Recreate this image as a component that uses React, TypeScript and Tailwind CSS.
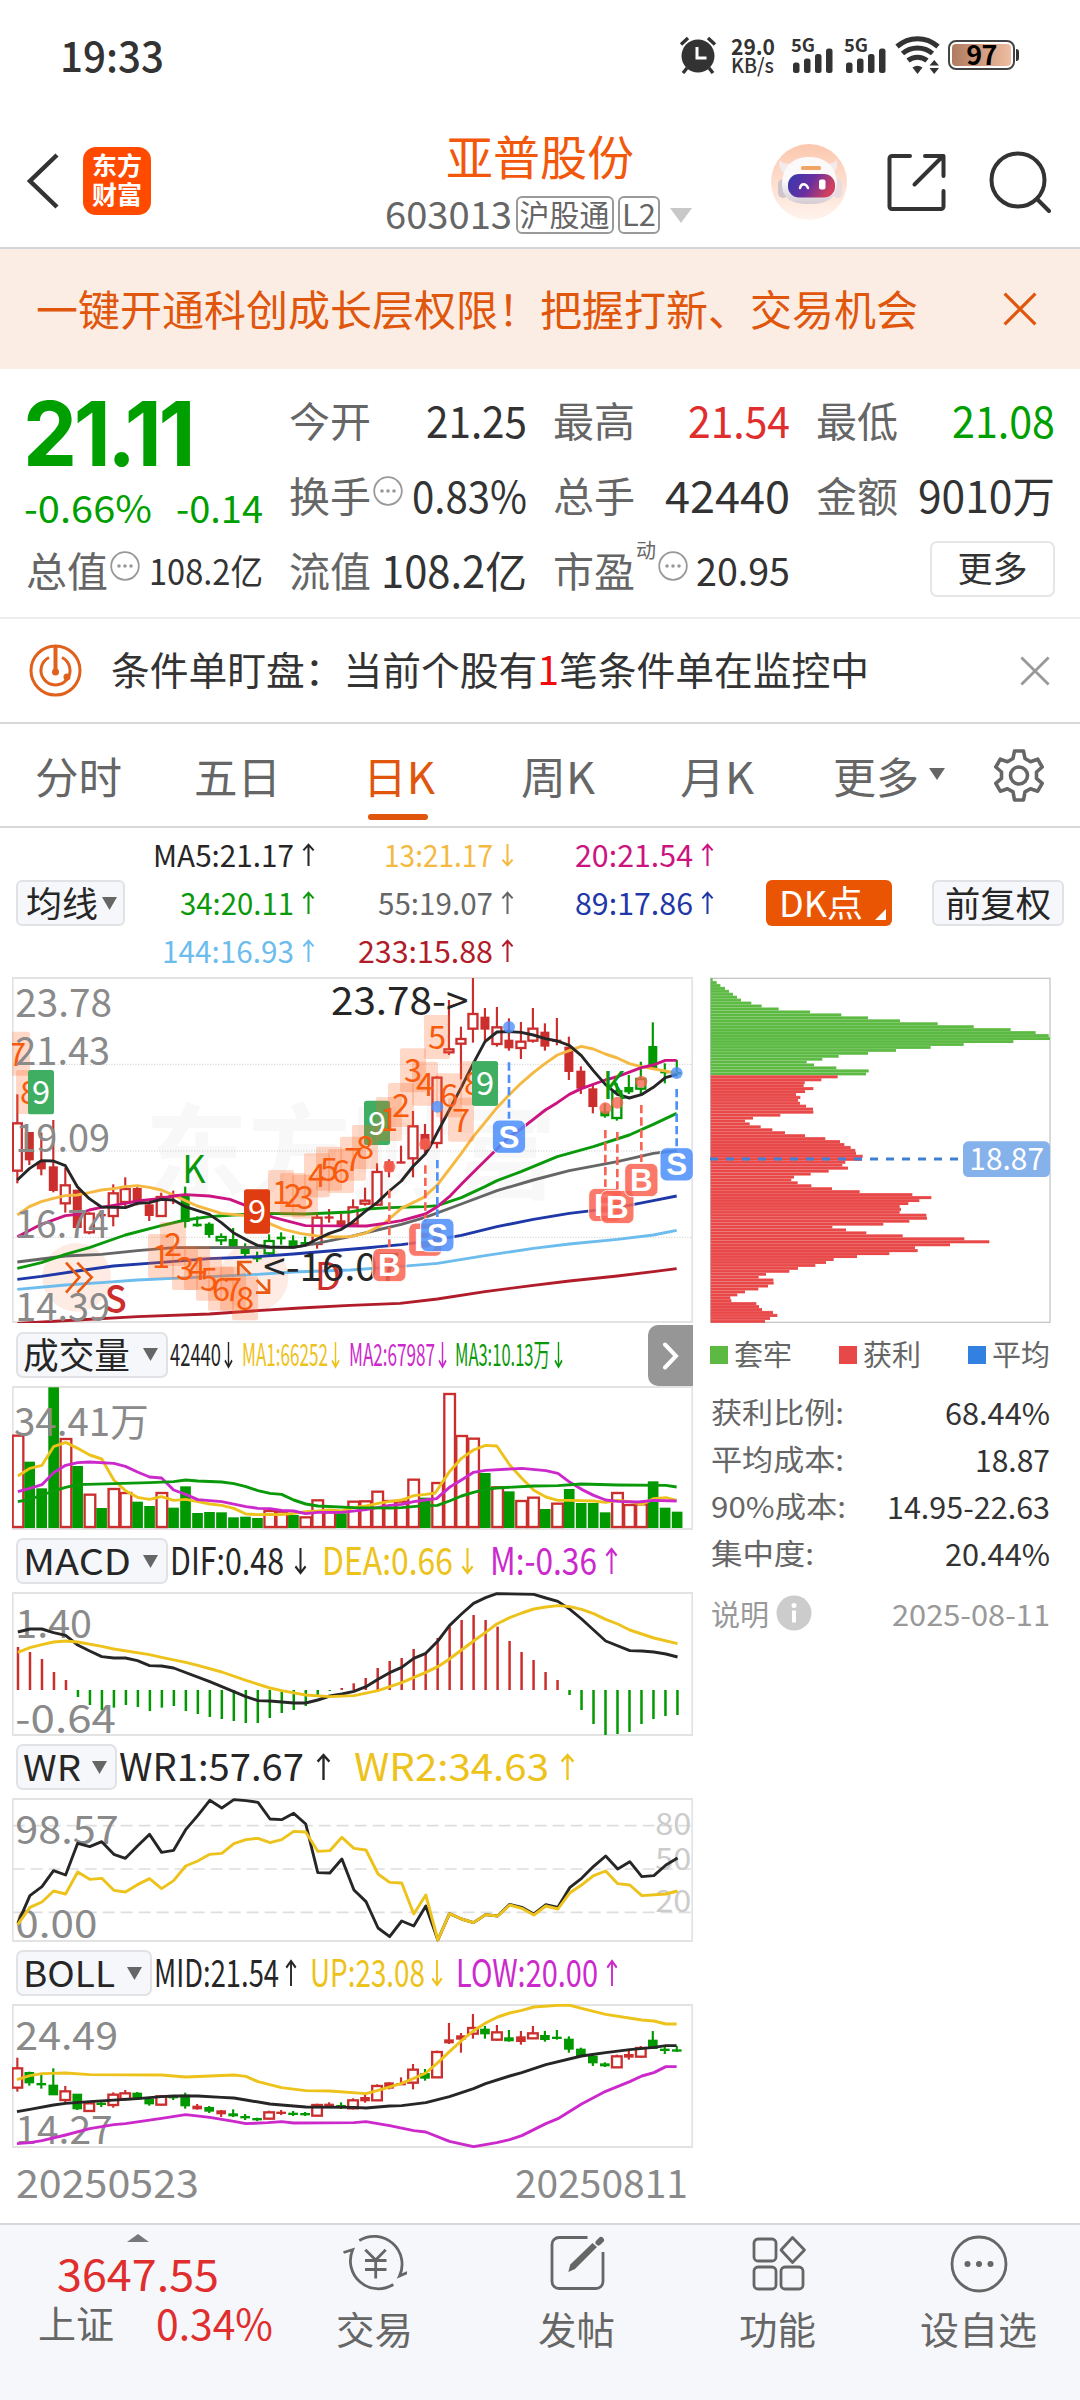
import React, { useLayoutEffect, useRef } from "react";

const c = {
  red: "#cc2e2e",
  green: "#009900",
  black: "#262626",
  yellow: "#edc21a",
  purple: "#cc29cc",
  orange: "#f75a0a",
  axis: "#8a8a8a",
};

const FONT = "'Noto Sans CJK SC', 'Noto Sans', sans-serif";

// Squeezes one line of text into a fixed width, like an auto-sizing label
function Fit({ w, className = "", children }: { w: number; className?: string; children: React.ReactNode }) {
  const ref = useRef<HTMLSpanElement>(null);
  useLayoutEffect(() => {
    const el = ref.current;
    if (!el) return;
    el.style.transform = "none";
    const natural = el.getBoundingClientRect().width;
    if (natural) el.style.transform = `scaleX(${w / natural})`;
  }, [w, children]);
  return (
    <span className={`block shrink-0 ${className}`} style={{ width: w }}>
      <span ref={ref} className="inline-block origin-left whitespace-nowrap align-top">
        {children}
      </span>
    </span>
  );
}

function Arrow({ down, w = 13, h = 24, className = "" }: { down?: boolean; w?: number; h?: number; className?: string }) {
  return (
    <svg width={w} height={h} viewBox="0 0 14 26" preserveAspectRatio="none" fill="none" stroke="currentColor" strokeWidth="2.200" className={`shrink-0 ${className}`}>
      {down ? <path d="M7 1v23M1.5 18 7 24.2 12.5 18" /> : <path d="M7 25V2M1.5 8 7 1.8 12.5 8" />}
    </svg>
  );
}

function Tri({ w = 15, h = 12, color = "#666", className = "" }: { w?: number; h?: number; color?: string; className?: string }) {
  return (
    <svg width={w} height={h} viewBox="0 0 15 12" preserveAspectRatio="none" className={`shrink-0 ${className}`}>
      <path d="M0 0h15L7.5 12z" fill={color} />
    </svg>
  );
}

function Dots() {
  return (
    <svg width="30" height="30" viewBox="0 0 30 30" className="shrink-0 -mt-2">
      <circle cx="15" cy="15" r="13.8" fill="none" stroke="#999" strokeWidth="1.8" />
      <circle cx="9" cy="15" r="1.8" fill="#999" />
      <circle cx="15" cy="15" r="1.8" fill="#999" />
      <circle cx="21" cy="15" r="1.8" fill="#999" />
    </svg>
  );
}

function Close({ size, color, sw = 3 }: { size: number; color: string; sw?: number }) {
  return (
    <svg width={size} height={size} viewBox="0 0 32 32" fill="none" stroke={color} strokeWidth={sw}>
      <path d="M1.5 1.5l29 29M30.5 1.5l-29 29" />
    </svg>
  );
}

/* ---------- top bars ---------- */

function Signal() {
  return (
    <div className="flex flex-col items-start">
      <Fit w={24} className="text-[18px] leading-[14px] font-bold">5G</Fit>
      <svg width="42" height="26" viewBox="0 0 42 26" className="-mt-[4px]" fill="#333">
        <rect x="2" y="15.500" width="6.500" height="10.500" rx="2.500" />
        <rect x="13" y="11.500" width="6.500" height="14.500" rx="2.500" />
        <rect x="24" y="7" width="6.500" height="19" rx="2.500" />
        <rect x="35" y="1.500" width="6.500" height="24.500" rx="2.500" />
      </svg>
    </div>
  );
}

function StatusBar() {
  return (
    <div className="flex h-[110px] items-center pl-[60px] pr-[61px] text-[#333]">
      <Fit w={104} className="-mt-[3px] text-[42px] leading-none font-medium">19:33</Fit>
      <div className="ml-auto flex h-[38px] items-center">
        <svg width="38" height="38" viewBox="0 0 38 38">
          <circle cx="19" cy="20" r="16.500" fill="#333" />
          <path d="M2 8.500 9 2M36 8.500 29 2M8 32l-4 5M30 32l4 5" stroke="#333" strokeWidth="3.400" fill="none" />
          <path d="M18 11v11h9.500" stroke="#fff" strokeWidth="3" fill="none" />
        </svg>
        <div className="ml-[14px] flex flex-col gap-[2px] font-medium">
          <Fit w={44} className="text-[22px] leading-[18px] font-bold">29.0</Fit>
          <Fit w={43} className="text-[20px] leading-[18px]">KB/s</Fit>
        </div>
        <div className="ml-[16px]"><Signal /></div>
        <div className="ml-[11px]"><Signal /></div>
        <svg width="46" height="38" viewBox="0 0 46 38" className="ml-[9px]" fill="none" stroke="#333" strokeWidth="5">
          <path d="M2 10.500c12-10.500 29-10.500 41 0" />
          <path d="M7.500 17.500c8.500-7.500 21.500-7.500 30 0" />
          <path d="M13 24.500c5.500-4.500 13.500-4.500 19 0" />
          <path d="M17.500 31.500q5-3.500 10 0l-5 6.500z" fill="#333" stroke="none" />
          <path d="M34.500 29.500h9.500L39.200 24zM34.500 32h9.500l-4.800 6z" fill="#333" stroke="none" />
        </svg>
        <div className="ml-[7px] flex h-[30px] w-[67px] items-center justify-center rounded-[8px] border-2 border-[#444] bg-linear-to-r from-[#ae7a5e] to-[#f1bfa3] bg-clip-content p-[2px] text-[27px] leading-none font-bold text-black">
          <span className="-mt-[3px] tracking-tight">97</span>
        </div>
        <div className="ml-px h-3 w-[3px] rounded-r bg-[#333]" />
      </div>
    </div>
  );
}

function Robot() {
  return (
    <svg width="76" height="76" viewBox="0 0 76 76">
      <defs>
        <linearGradient id="halo" x1="0" y1="0" x2="0" y2="1">
          <stop offset="0" stopColor="#fcc7ae" />
          <stop offset="1" stopColor="#fff4ee" />
        </linearGradient>
        <linearGradient id="visor" x1="0" y1="0" x2="1" y2="0.300">
          <stop offset="0" stopColor="#3338b0" />
          <stop offset="0.550" stopColor="#6a2fa0" />
          <stop offset="1" stopColor="#d0405e" />
        </linearGradient>
        <linearGradient id="helmet" x1="0" y1="0" x2="0" y2="1">
          <stop offset="0.500" stopColor="#fbf9fa" />
          <stop offset="1" stopColor="#d5ccd3" />
        </linearGradient>
      </defs>
      <circle cx="38" cy="38" r="38" fill="url(#halo)" />
      <path d="M9 15c1 5 5 4 10 5l-6 10c-4-4-6-10-4-15zM65 15c-1 5-5 4-9 5l6 10c4-4 5-10 3-15z" fill="#f3eaec" />
      <rect x="7" y="35" width="10" height="19" rx="5" fill="#cfc5cd" />
      <rect x="62" y="35" width="9" height="19" rx="4.500" fill="#e9dbe0" />
      <path d="M38 13c17 0 27 10 28 26 0 14-8 21-28 21s-27-7-27-21c1-16 10-26 27-26z" fill="url(#helmet)" />
      <rect x="17" y="30" width="47" height="23.500" rx="11" fill="url(#visor)" />
      <rect x="30" y="22" width="20" height="4" rx="1.500" fill="#f0a566" />
      <path d="M29 44c1-5 6-5 8 0" fill="none" stroke="#fff" strokeWidth="2.500" strokeLinecap="round" />
      <rect x="48" y="35.500" width="6.500" height="10" rx="2" fill="#fff" />
    </svg>
  );
}

function NavBar() {
  return (
    <div className="grid h-[139px] grid-cols-[370px_340px_370px] border-b-2 border-[#d3d4d8]">
      <div className="flex items-center pt-[5px] pl-[26px]">
        <svg width="34" height="56" viewBox="0 0 34 56" fill="none" stroke="#333" strokeWidth="4.500">
          <path d="M31 2 4 28l27 26" />
        </svg>
        <div className="ml-[23px] flex size-[68px] flex-col items-center justify-center rounded-[13px] bg-[#ff4a00] pb-1 text-[25px] leading-[29px] font-bold text-white">
          <span>东方</span>
          <span>财富</span>
        </div>
      </div>
      <div className="flex flex-col items-center pt-[20px]">
        <div className="text-[47px] leading-[50px] text-[#f2580c]">亚普股份</div>
        <div className="mt-[16px] -ml-[4px] flex h-[38px] items-center text-[#666]">
          <Fit w={127} className="text-[38px] leading-none -mt-1">603013</Fit>
          <span className="ml-1 flex h-[38px] w-[98px] items-center justify-center rounded-[6px] border-2 border-[#999] pb-1 text-[30px] leading-none">沪股通</span>
          <span className="ml-1 flex h-[38px] w-[42px] items-center justify-center rounded-[6px] border-2 border-[#999] pb-1 text-[30px] leading-none">
            <Fit w={34}>L2</Fit>
          </span>
          <Tri w={22} h={15} color="#c8c8c8" className="ml-[10px]" />
        </div>
      </div>
      <div className="flex items-start pt-[34px] pl-[61px]">
        <Robot />
        <svg width="60" height="60" viewBox="0 0 60 60" className="mt-[8px] ml-[39px]" fill="none" stroke="#333" strokeWidth="4" strokeLinecap="round" strokeLinejoin="round">
          <path d="M24 4H6a2.500 2.500 0 0 0-2.500 2.500v48A2.500 2.500 0 0 0 6 57h49a2.500 2.500 0 0 0 2.500-2.500V39" />
          <path d="M39 4h18.500v20M57 4 28.500 32.500" />
        </svg>
        <svg width="62" height="62" viewBox="0 0 62 62" className="mt-[7px] ml-[43px]" fill="none" stroke="#333" strokeWidth="4" strokeLinecap="round">
          <circle cx="29" cy="29" r="26.500" />
          <path d="M48 48l12 12" />
        </svg>
      </div>
    </div>
  );
}

/* ---------- quote ---------- */

function Cell({ label, value, w, color = "text-[#333]", size = "text-[43px]", extra }: {
  label: string; value: string; w: number; color?: string; size?: string; extra?: React.ReactNode;
}) {
  return (
    <div className="flex h-[75px] items-center leading-none">
      <span className="text-[41px] text-[#666]">{label}</span>
      {extra}
      <Fit w={w} className={`ml-auto ${size} ${color}`}>{value}</Fit>
    </div>
  );
}

function Quote() {
  return (
    <div className="grid h-[250px] grid-cols-[237px_238px_237px_239px] gap-x-[26px] border-b-2 border-[#ececec] pr-[24px] pl-[26px] pt-[13px]">
      <div>
        <div className="flex h-[99px] items-center pt-[4px]">
          <Fit w={169} className="-ml-[3px] font-['Inter'] text-[90px] leading-none font-bold tracking-[-0.04em] text-[#009f00]">21.11</Fit>
        </div>
        <div className="flex h-[51px] items-center justify-between pt-px text-[38px] leading-none text-[#009f00]">
          <Fit w={128} className="-ml-[2px]">-0.66%</Fit>
          <Fit w={87}>-0.14</Fit>
        </div>
        <Cell label="总值" value="108.2亿" w={114} size="text-[35px]" extra={<span className="ml-[2px]"><Dots /></span>} />
      </div>
      <div>
        <Cell label="今开" value="21.25" w={101} />
        <Cell label="换手" value="0.83%" w={115} extra={<span className="ml-[2px]"><Dots /></span>} />
        <Cell label="流值" value="108.2亿" w={146} />
      </div>
      <div>
        <Cell label="最高" value="21.54" w={102} color="text-[#e02e2e]" />
        <Cell label="总手" value="42440" w={125} />
        <Cell
          label="市盈"
          value="20.95"
          w={94}
          size="text-[39px]"
          extra={
            <>
              <span className="-mt-10 ml-px text-[20px] text-[#666]">动</span>
              <span className="ml-[2px]"><Dots /></span>
            </>
          }
        />
      </div>
      <div>
        <Cell label="最低" value="21.08" w={103} color="text-[#009f00]" />
        <Cell label="金额" value="9010万" w={137} />
        <div className="flex h-[75px] items-center justify-end">
          <span className="flex h-[56px] w-[125px] -translate-y-px items-center justify-center rounded-[7px] border-2 border-[#e6e6e6] pb-1 text-[35px] leading-none text-[#333]">更多</span>
        </div>
      </div>
    </div>
  );
}

function Alert() {
  return (
    <div className="flex h-[105px] items-center border-b-2 border-[#d9d9d9] pr-[30px] pl-[29px]">
      <svg width="53" height="53" viewBox="0 0 53 53" fill="none" stroke="#e0611c" strokeWidth="3">
        <circle cx="26.500" cy="26.500" r="24.500" />
        <path d="M20 13.500a14.500 14.500 0 1 0 13 0" />
        <path d="M26.500 3v24" strokeWidth="4" />
        <circle cx="26.500" cy="28" r="3.500" fill="#e0611c" stroke="none" />
        <circle cx="38" cy="33" r="3.500" fill="#e0611c" stroke="none" />
      </svg>
      <Fit w={758} className="ml-[29px] text-[39px] leading-none text-[#333] -mt-[4px]">
        条件单盯盘：当前个股有<span className="text-[#f00a0a]">1</span>笔条件单在监控中
      </Fit>
      <div className="ml-auto"><Close size={30} color="#999" /></div>
    </div>
  );
}

function Tabs() {
  return (
    <div className="flex h-[104px] items-center border-b-2 border-[#d9d9d9] pt-px text-[43px] leading-none text-[#666]">
      <Fit w={87} className="ml-[35px]">分时</Fit>
      <Fit w={87} className="ml-[72px]">五日</Fit>
      <div className="relative ml-[82px] flex h-full items-center text-[#e0560c]">
        <Fit w={72}>日K</Fit>
        <span className="absolute bottom-[6px] left-[5px] h-[6px] w-[60px] rounded-full bg-[#e0560c]" />
      </div>
      <Fit w={74} className="ml-[86px]">周K</Fit>
      <Fit w={74} className="ml-[85px]">月K</Fit>
      <Fit w={86} className="ml-[79px]">更多</Fit>
      <Tri w={16} h={12} className="ml-[10px] -mt-1" />
      <svg width="54" height="54" viewBox="0 0 54 54" className="ml-[47px]" fill="none" stroke="#666" strokeWidth="3.600">
        <path d="M22.500 2h9l1.500 7.500 5.500 3.200 7.200-2.500 4.500 7.800-5.700 5v6.400l5.700 5-4.500 7.800-7.200-2.500-5.500 3.200-1.500 8.100h-9L21 42.900l-5.500-3.200-7.200 2.500-4.500-7.800 5.700-5V23l-5.700-5 4.500-7.800 7.200 2.500L21 9.500z" strokeLinejoin="round" />
        <circle cx="27" cy="26.500" r="8.500" />
      </svg>
    </div>
  );
}

function Ma({ text, w, down, color }: { text: string; w: number; down?: boolean; color: string }) {
  return (
    <div className={`flex items-center justify-end ${color}`}>
      <Fit w={w} className="-mt-[3px]">{text}</Fit>
      <Arrow down={down} className="ml-[8px]" />
    </div>
  );
}

function MaPanel() {
  const btn = "flex h-[46px] shrink-0 items-center rounded-[6px] border-2 border-[#e0e2e6] bg-[#f6f7fa] text-[35px] leading-none text-[#262626]";
  return (
    <div className="flex h-[148px] items-center">
      <div className={`${btn} ml-[16px] w-[109px] gap-1 pl-2`}>
        <Fit w={72} className="-mt-1">均线</Fit>
        <Tri w={15} h={13} />
      </div>
      <div className="grid h-[144px] w-[590px] grid-cols-[190px_199px_200px] grid-rows-3 text-[30px] leading-none">
        <Ma text="MA5:21.17" w={141} color="text-[#262626]" />
        <Ma text="13:21.17" w={109} down color="text-[#f5b942]" />
        <Ma text="20:21.54" w={118} color="text-[#cc1480]" />
        <Ma text="34:20.11" w={114} color="text-[#0a990a]" />
        <Ma text="55:19.07" w={115} color="text-[#666]" />
        <Ma text="89:17.86" w={118} color="text-[#1f38a8]" />
        <Ma text="144:16.93" w={132} color="text-[#6cbcee]" />
        <Ma text="233:15.88" w={135} color="text-[#b01c2a]" />
      </div>
      <div className="relative ml-[51px] flex h-[46px] w-[126px] shrink-0 items-center rounded-[6px] bg-[#ea5504] pl-[13px] text-[36px] leading-none text-white">
        <Fit w={84} className="-mt-1">DK点</Fit>
        <svg width="11" height="11" className="absolute right-[6px] bottom-[6px]"><path d="M11 0v11H0z" fill="#fff" /></svg>
      </div>
      <div className={`${btn} ml-[40px] w-[132px] justify-center`}>
        <Fit w={106} className="-mt-1">前复权</Fit>
      </div>
    </div>
  );
}

/* ---------- charts ---------- */

// One bar every 36 units, three units to a pixel
const bx = (i: number) => 52 + i * 35.97;

function Line({ pts, color, w = 2.9, flat }: { pts: string; color: string; w?: number; flat?: boolean }) {
  return (
    <polyline
      points={pts}
      transform={flat ? "scale(1.339 1)" : undefined}
      fill="none"
      stroke={color}
      strokeWidth={w}
      strokeLinejoin="round"
      vectorEffect="non-scaling-stroke"
    />
  );
}

function Label({ x, y, w, size = 116, color = c.axis, weight = 400, children }: {
  x: number; y: number; w: number; size?: number; color?: string; weight?: number; children: string;
}) {
  return (
    <text x={x} y={y} fontSize={size} fontWeight={weight} fill={color} textLength={w} lengthAdjust="spacingAndGlyphs" fontFamily={FONT}>
      {children}
    </text>
  );
}

function Chart({ top, h, children }: { top: number; h: number; children: React.ReactNode }) {
  return (
    <svg width="681" height={h} viewBox={`36 ${top} 2043 ${h * 3}`} className="block">
      <rect x="38" y={top + 3} width="2039" height={h * 3 - 6} fill="#fff" stroke="#e3e3e3" strokeWidth="6" />
      {children}
    </svg>
  );
}

// [high, low, body top, body bottom, kind]; capital kinds are hollow
type Bar = [number, number, number, number, "r" | "R" | "g" | "G"];

function Candles({ bars, bw = 27 }: { bars: Bar[]; bw?: number }) {
  return (
    <>
      {bars.map(([hi, lo, t, b, k], i) => {
        const x = bx(i);
        const color = k === "r" || k === "R" ? c.red : c.green;
        const hollow = (k === "R" || k === "G") && b - t > 8;
        return (
          <g key={i} stroke={color} fill={hollow ? "#fff" : color}>
            <path d={`M${x} ${hi}V${lo}`} strokeWidth="6.500" />
            {hollow ? (
              <rect x={x - bw / 2} y={t + 2} width={bw} height={b - t - 4} strokeWidth="7" />
            ) : (
              <rect x={x - bw / 2} y={t - 1} width={bw} height={Math.max(b - t, 5) + 2} stroke="none" />
            )}
          </g>
        );
      })}
    </>
  );
}

const daily: Bar[] = [
  [373, 640, 458, 604, "R"], [487, 585, 487, 570, "r"], [488, 616, 576, 597, "r"], [450, 667, 590, 662, "r"],
  [594, 728, 644, 702, "R"], [660, 775, 660, 773, "r"], [727, 793, 729, 789, "R"], [725, 745, 733, 738, "r"],
  [643, 769, 668, 740, "R"], [622, 710, 655, 698, "R"], [650, 706, 655, 697, "r"], [697, 753, 704, 737, "r"],
  [668, 740, 679, 740, "R"], [662, 702, 674, 680, "r"], [650, 773, 679, 755, "g"], [739, 770, 762, 768, "g"],
  [757, 803, 762, 794, "g"], [790, 825, 799, 813, "G"], [774, 832, 808, 829, "g"], [820, 858, 836, 851, "g"],
  [845, 876, 862, 867, "g"], [793, 855, 811, 852, "G"], [787, 824, 801, 807, "g"], [796, 832, 812, 828, "g"],
  [800, 828, 817, 823, "g"], [733, 836, 741, 824, "R"], [717, 758, 740, 745, "r"], [732, 772, 752, 766, "r"],
  [688, 765, 710, 763, "R"], [653, 707, 690, 703, "R"], [580, 708, 604, 706, "R"], [568, 622, 575, 604, "r"],
  [527, 580, 575, 580, "r"], [423, 622, 467, 567, "R"], [462, 550, 493, 537, "r"], [318, 535, 321, 521, "R"],
  [90, 255, 236, 249, "R"], [170, 328, 205, 223, "R"], [24, 218, 130, 178, "R"], [114, 212, 141, 178, "r"],
  [111, 230, 170, 224, "R"], [145, 242, 210, 234, "r"], [156, 267, 213, 236, "R"], [114, 218, 174, 214, "R"],
  [160, 242, 186, 229, "r"], [144, 226, 210, 214, "r"], [200, 330, 231, 305, "r"], [289, 372, 303, 355, "r"],
  [342, 430, 356, 410, "r"], [400, 443, 425, 438, "g"], [340, 452, 362, 446, "G"], [315, 372, 352, 366, "g"],
  [275, 372, 325, 358, "G"], [157, 295, 229, 293, "g"], [280, 340, 304, 309, "g"], [270, 320, 307, 312, "g"],
];

const boll: Bar[] = [
  [968, 1070, 998, 1060, "R"], [1010, 1052, 1012, 1044, "g"], [1015, 1061, 1045, 1050, "g"], [1000, 1080, 1050, 1080, "g"],
  [1053, 1103, 1067, 1097, "R"], [1077, 1125, 1077, 1122, "g"], [1100, 1130, 1103, 1130, "R"], [1102, 1116, 1104, 1109, "g"],
  [1072, 1118, 1077, 1112, "R"], [1065, 1097, 1073, 1094, "R"], [1071, 1095, 1074, 1092, "g"], [1086, 1112, 1092, 1107, "g"],
  [1080, 1111, 1082, 1111, "R"], [1080, 1095, 1084, 1089, "g"], [1073, 1121, 1080, 1113, "g"], [1107, 1124, 1113, 1122, "r"],
  [1113, 1134, 1117, 1129, "g"], [1125, 1146, 1127, 1137, "r"], [1123, 1146, 1136, 1143, "g"], [1137, 1155, 1144, 1149, "g"],
  [1148, 1158, 1150, 1154, "g"], [1127, 1153, 1130, 1153, "R"], [1125, 1140, 1131, 1136, "r"], [1128, 1143, 1134, 1139, "g"],
  [1131, 1143, 1135, 1140, "g"], [1106, 1144, 1108, 1144, "R"], [1102, 1117, 1107, 1113, "r"], [1102, 1122, 1111, 1116, "g"],
  [1090, 1123, 1094, 1122, "R"], [1075, 1103, 1087, 1098, "r"], [1048, 1098, 1051, 1098, "R"], [1042, 1063, 1043, 1060, "r"],
  [1027, 1050, 1045, 1050, "r"], [987, 1063, 1002, 1045, "R"], [1002, 1037, 1015, 1030, "g"], [947, 1029, 949, 1029, "R"],
  [864, 927, 914, 924, "r"], [894, 953, 902, 913, "r"], [837, 911, 877, 898, "R"], [873, 911, 882, 897, "g"],
  [870, 917, 890, 916, "R"], [885, 920, 908, 918, "g"], [888, 929, 905, 920, "r"], [873, 912, 893, 912, "R"],
  [888, 920, 901, 914, "g"], [885, 914, 906, 911, "g"], [904, 953, 912, 943, "g"], [938, 965, 942, 962, "g"],
  [958, 993, 963, 984, "g"], [982, 996, 986, 993, "g"], [959, 999, 962, 999, "R"], [945, 974, 958, 967, "r"],
  [933, 968, 937, 967, "R"], [888, 942, 915, 941, "g"], [935, 957, 942, 947, "g"], [933, 951, 944, 949, "g"],
];

// Sequence count tags: [left, top, digit]; nines are filled
const tags: [number, number, string][] = [
  [12, 185, "7"], [48, 300, "8"], [444, 792, "1"], [480, 756, "2"], [516, 828, "3"], [552, 828, "4"], [588, 860, "5"],
  [624, 890, "6"], [660, 890, "7"], [696, 919, "8"], [804, 600, "1"], [840, 609, "2"], [876, 614, "3"], [912, 550, "4"],
  [948, 530, "5"], [984, 537, "6"], [1020, 500, "7"], [1056, 465, "8"], [1128, 381, "1"], [1164, 339, "2"],
  [1200, 235, "3"], [1236, 275, "4"], [1272, 135, "5"], [1308, 310, "6"], [1344, 383, "7"], [1380, 274, "8"],
];

const nines: [number, number, string][] = [
  [84, 300, "#3fae62"], [732, 658, "#e03c12"], [1092, 392, "#3fae62"], [1416, 274, "#3fae62"],
];

// Trades: [x, dot y, dash start, badge centre y, side]
const trades: [number, number, number, number, "B" | "S"][] = [
  [1168, 590, 660, 885, "B"], [1276, 522, 586, 809, "B"], [1312, 410, 570, 795, "S"], [1527, 171, 277, 500, "S"],
  [1816, 415, 480, 705, "B"], [1852, 398, 486, 711, "B"], [1924, 335, 405, 630, "B"], [2030, 309, 357, 583, "S"],
];

function MainChart() {
  return (
    <Chart top={21} h={346}>
      <Label x={435} y={662} w={1235} size={310} color="#f8f8f8" weight={700}>东方财富</Label>
      <g stroke="#c8c8c8" strokeWidth="3" strokeDasharray="3 5">
        <path d="M38 283H2077M38 543H2077M38 802H2077" />
      </g>
      <circle cx="230" cy="922" r="103" fill="#f7703a" opacity="0.140" />
      <circle cx="762" cy="922" r="103" fill="#f7703a" opacity="0.140" />
      <Candles bars={daily} />
      <Line color="#b01c2a" pts="52,1060 232,1050 412,1040 628,1032 772,1022 900,1014 1050,1006 1200,1000 1312,987 1455,965 1600,946 1708,933 1852,918 1960,905 2030,896" />
      <Line color="#6cbcee" pts="52,958 196,945 304,938 412,930 520,925 628,920 772,913 880,906 1050,900 1204,889 1312,880 1455,857 1600,835 1708,822 1852,808 1960,795 2030,781" />
      <Line color="#1f38a8" pts="52,928 124,919 232,903 340,888 484,877 628,866 772,860 880,852 988,843 1096,834 1204,824 1276,815 1384,796 1491,770 1600,748 1708,730 1852,713 1960,692 2030,678" />
      <Line color="#666" pts="52,876 196,858 304,853 412,842 520,833 880,832 950,820 1050,800 1132,780 1204,763 1276,742 1384,702 1491,662 1600,630 1708,602 1852,575 1960,550 2030,542" />
      <Line color="#0a990a" pts="52,895 124,878 196,853 268,833 376,795 484,767 556,750 628,740 700,735 810,730 916,732 1050,726 1100,717 1168,713 1276,710 1312,707 1384,683 1455,650 1491,632 1563,605 1672,560 1780,530 1888,495 1960,463 2030,430" />
      <Line color="#f5b942" pts="52,735 88,710 124,695 160,685 196,677 232,675 268,668 304,660 340,656 376,650 412,647 448,652 484,660 520,675 556,692 592,708 664,730 736,737 800,757 850,778 900,790 952,798 1000,801 1050,800 1096,790 1150,762 1204,715 1270,683 1312,645 1384,550 1420,500 1455,457 1491,413 1527,375 1563,340 1600,308 1636,280 1672,255 1708,242 1744,229 1780,237 1816,252 1852,264 1888,281 1924,290 1996,303 2030,310" />
      <Line color="#cc1480" pts="52,800 124,763 196,737 232,733 268,720 304,712 376,700 412,693 484,685 520,678 556,674 628,678 690,688 736,706 772,726 820,742 916,767 1100,768 1168,758 1204,752 1276,732 1312,710 1348,680 1384,643 1420,607 1455,572 1491,537 1527,500 1563,477 1600,448 1636,420 1672,398 1708,373 1744,356 1816,330 1852,320 1924,293 1960,285 1996,271 2030,271" />
      <Line color={c.black} pts="52,630 88,596 124,572 160,573 196,587 232,650 268,686 304,711 376,713 412,700 448,698 484,688 520,690 556,710 628,733 664,758 700,788 736,808 772,826 810,831 880,832 916,826 952,807 988,790 1024,778 1055,758 1096,724 1132,697 1168,663 1204,633 1240,588 1276,552 1290,530 1312,487 1340,435 1384,352 1420,280 1455,215 1491,186 1527,185 1563,187 1600,195 1636,206 1672,213 1708,226 1744,257 1780,302 1816,343 1852,373 1888,384 1924,374 1960,352 1996,323 2030,313" />

      {nines.slice(2).map(([x, y, fill]) => (
        <rect key={x} x={x} y={y} width="78" height="133" rx="8" fill={fill} />
      ))}
      {tags.map(([x, y, d], i) => (
        <g key={i}>
          <rect x={x} y={y} width="78" height="132" rx="6" fill="#ff6a28" opacity="0.260" />
          <text x={x + 39} y={y + 102} fontSize="98" textAnchor="middle" fill={c.orange} fontFamily={FONT}>{d}</text>
        </g>
      ))}
      {nines.map(([x, y, fill], i) => (
        <g key={x}>
          {i !== 2 && <rect x={x} y={y} width="78" height="133" rx="8" fill={fill} />}
          <text x={x + 39} y={y + 102} fontSize="98" textAnchor="middle" fill="#fff" fontFamily={FONT}>9</text>
        </g>
      ))}

      <g fill="none" stroke="#e85a10" strokeWidth="8">
        <path d="M198 878l40 44-40 46M232 878l43 44-43 46" />
        <path d="M715 916v-40h40M715 876l37 37M768 968h39v-40M807 968l-37-38" />
      </g>
      <Label x={547} y={639} w={70} color="#0a990a">K</Label>
      <Label x={1808} y={387} w={68} color="#0a990a">K</Label>
      <Label x={944} y={961} w={80} color={c.red}>D</Label>
      <Label x={314} y={1028} w={66} color={c.red} weight={500}>S</Label>
      <Label x={46} y={141} w={290}>23.78</Label>
      <Label x={46} y={285} w={284}>21.43</Label>
      <Label x={46} y={546} w={284}>19.09</Label>
      <Label x={46} y={804} w={280}>16.74</Label>
      <Label x={46} y={1054} w={284}>14.39</Label>
      <Label x={993} y={135} w={412} color={c.black}>23.78-&gt;</Label>
      <Label x={790} y={933} w={410} color={c.black}>&lt;-16.07</Label>

      {trades.map(([x, dot, dash, cy, side]) => {
        const fill = side === "B" ? "#fa6452" : "#4c90fb";
        return (
          <g key={x}>
            <path d={`M${x} ${dash}V${cy - 54}`} stroke={fill} strokeWidth="8" strokeDasharray="25 12" />
            <circle cx={x} cy={dot} r="18" fill={fill} opacity="0.800" />
            <rect x={x - 50} y={cy - 50} width="100" height="100" rx="20" fill={fill} stroke="#fff" strokeWidth="3" opacity="0.860" />
            <text x={x} y={cy + 33} fontSize="94" fontWeight="700" textAnchor="middle" fill="#fff" fontFamily="'Liberation Sans', Arial, sans-serif">{side}</text>
          </g>
        );
      })}
    </Chart>
  );
}

const volume = "r347 g425 g505 g202 r357 g438 r524 g564 r507 r519 g545 g558 r519 g563 g499 g579 g576 g577 g592 g590 g594 r573 r575 g585 r592 r541 r577 g580 r545 r544 r515 r543 r545 r479 g533 r489 r222 r348 r356 g459 r502 g514 r543 r533 g567 r551 g507 g549 g549 g577 r519 r555 r553 g484 g563 g575".split(" ");

function VolumeChart() {
  return (
    <Chart top={198} h={144}>
      {volume.map((v, i) => {
        const y = Number(v.slice(1));
        return v[0] === "r" ? (
          <rect key={i} x={bx(i) - 14} y={y} width="32" height={621 - y} fill="#fff" stroke={c.red} strokeWidth="7" />
        ) : (
          <rect key={i} x={bx(i) - 15} y={y} width="32" height={624 - y} fill={c.green} />
        );
      })}
      <Label x={42} y={348} w={404}>34.41万</Label>
      <Line flat color={c.yellow} pts="40,468 67,445 94,436 120,380 147,367 174,385 201,405 228,417 255,480 281,512 308,532 335,538 362,530 389,541 416,538 443,545 470,552 497,556 524,565 551,582 578,584 605,583 631,584 658,580 685,575 712,573 739,570 766,573 793,562 820,558 847,550 873,544 900,540 927,527 954,523 975,519 1007,455 1034,415 1061,390 1088,376 1113,378 1142,435 1169,475 1196,511 1223,531 1250,541 1277,541 1330,543 1357,547 1384,541 1411,545 1438,553 1465,536 1492,533 1516,541" />
      <Line flat color={c.purple} pts="40,515 67,505 94,494 120,458 147,436 174,428 201,426 255,430 281,439 308,456 335,471 362,474 389,510 416,523 443,539 497,545 551,560 578,565 605,566 631,571 658,573 685,581 712,577 766,577 820,569 873,556 900,553 927,545 954,540 978,536 1007,502 1034,480 1061,457 1088,451 1169,445 1223,452 1250,460 1277,487 1303,508 1330,526 1357,540 1384,544 1430,546 1465,541 1516,543" />
      <Line flat color="#0a990a" pts="40,545 67,538 94,525 120,513 147,502 174,494 255,491 335,488 389,485 416,480 443,483 497,486 524,491 551,500 578,512 605,520 631,523 658,540 685,552 712,558 793,563 873,564 900,563 950,557 980,556 1007,543 1034,528 1061,517 1088,508 1113,504 1196,498 1250,497 1303,492 1384,495 1492,496 1516,501" />
    </Chart>
  );
}

const macd = [981, 996, 1017, 1056, 1080, 1131, 1155, 1170, 1163, 1155, 1161, 1173, 1163, 1158, 1173, 1182, 1191, 1197, 1203, 1209, 1209, 1194, 1179, 1170, 1158, 1130, 1113, 1104, 1090, 1074, 1044, 1023, 1014, 987, 1000, 954, 920, 900, 885, 900, 920, 963, 996, 1020, 1056, 1080, 1125, 1170, 1212, 1245, 1242, 1236, 1212, 1197, 1188, 1185];

function MacdChart() {
  return (
    <Chart top={816} h={144}>
      {macd.map((y, i) => (
        <path key={i} d={`M${bx(i) + 2} 1110V${y}`} stroke={y < 1110 ? c.red : c.green} strokeWidth="7.500" />
      ))}
      <Label x={46} y={955} w={230}>1.40</Label>
      <Label x={46} y={1238} w={302}>-0.64</Label>
      <Line flat color={c.black} pts="40,936 67,927 94,927 120,938 147,946 174,975 201,993 228,1010 255,1014 281,1014 308,1022 335,1037 362,1038 389,1044 470,1085 551,1130 578,1142 605,1143 658,1149 685,1149 712,1140 739,1128 766,1122 793,1114 820,1100 847,1078 873,1058 900,1042 927,1015 954,1000 981,963 1007,917 1034,882 1061,850 1088,833 1113,821 1196,823 1223,834 1250,844 1277,868 1303,897 1330,930 1357,963 1411,992 1438,993 1465,996 1492,1002 1518,1011" />
      <Line flat color={c.yellow} pts="40,997 67,983 94,974 120,966 147,963 174,966 228,979 255,987 335,1004 362,1012 416,1027 443,1036 497,1056 551,1081 605,1104 631,1112 685,1125 739,1130 793,1127 847,1112 900,1088 954,1057 981,1040 1007,1017 1061,963 1088,937 1113,912 1142,893 1169,879 1196,867 1223,861 1250,857 1277,860 1303,868 1330,881 1357,898 1384,912 1411,930 1465,954 1518,971" />
    </Chart>
  );
}

function WrChart() {
  return (
    <Chart top={189} h={144}>
      <path d="M38 272H2077M38 402H2077M38 532H2077" stroke="#dedede" strokeWidth="5" strokeDasharray="36 18" />
      <Label x={46} y={328} w={310}>98.57</Label>
      <Label x={46} y={609} w={246}>0.00</Label>
      <Label x={1966} y={299} w={108} size={90} color="#ccc">80</Label>
      <Label x={1966} y={404} w={108} size={90} color="#ccc">50</Label>
      <Label x={1966} y={532} w={108} size={90} color="#ccc">20</Label>
      <Line flat color={c.black} pts="40,565 67,482 94,455 120,407 147,420 174,325 201,335 228,320 255,358 281,370 308,333 335,298 362,352 389,346 416,284 443,242 470,196 497,219 524,194 551,197 578,202 605,252 631,254 658,235 685,267 712,413 739,414 766,372 793,465 820,500 847,579 873,605 900,558 927,573 954,513 981,615 1007,536 1034,552 1061,563 1088,539 1115,543 1142,508 1169,517 1196,537 1223,509 1250,517 1277,457 1303,430 1330,394 1357,363 1384,402 1411,380 1438,425 1465,422 1492,390 1518,369" />
      <Line flat color={c.yellow} pts="40,568 67,517 94,501 120,468 147,477 174,411 201,433 228,430 255,466 281,471 308,449 335,431 362,461 389,437 416,393 443,378 470,358 497,355 524,326 551,314 578,310 605,323 631,314 658,289 685,291 712,349 739,347 766,307 793,340 820,345 847,417 873,442 900,444 927,537 954,480 981,615 1007,536 1034,552 1061,563 1088,539 1115,543 1142,510 1169,520 1196,540 1223,513 1250,522 1277,473 1303,450 1330,422 1357,408 1384,446 1411,450 1438,482 1492,477 1518,468" />
    </Chart>
  );
}

function BollChart() {
  return (
    <Chart top={807} h={144}>
      <Candles bars={boll} bw={29} />
      <Label x={46} y={946} w={308}>24.49</Label>
      <Label x={46} y={1228} w={292}>14.27</Label>
      <Line flat color={c.black} pts="38,1130 67,1123 120,1110 147,1105 201,1100 308,1091 362,1085 389,1083 443,1083 497,1087 524,1089 551,1095 605,1107 631,1110 685,1116 793,1117 820,1119 873,1113 900,1112 954,1103 1007,1085 1061,1061 1088,1046 1142,1023 1169,1013 1223,989 1303,963 1357,953 1411,944 1465,937 1492,932 1516,932" />
      <Line flat color={c.yellow} pts="38,1034 67,1022 94,1016 147,1014 201,1019 362,1020 416,1026 524,1020 551,1024 578,1040 631,1058 685,1067 739,1068 820,1076 847,1066 900,1045 927,1030 954,1014 981,983 1007,950 1034,917 1061,887 1088,864 1115,846 1142,834 1169,826 1196,816 1250,811 1277,811 1303,820 1357,838 1438,855 1465,858 1492,867 1516,867" />
      <Line flat color={c.purple} pts="38,1226 67,1223 94,1217 147,1200 201,1181 255,1169 281,1166 362,1150 416,1139 470,1147 524,1159 551,1166 600,1163 631,1160 658,1164 793,1163 820,1160 873,1172 927,1187 954,1191 1007,1219 1061,1235 1113,1223 1142,1214 1169,1202 1223,1166 1250,1151 1303,1107 1357,1069 1411,1040 1438,1023 1465,1013 1492,995 1516,995" />
    </Chart>
  );
}

// [text, text width, gap to arrow, arrow width, gap after, down, colour]
type Item = [string, number, number, number, number, boolean, string];

function Readout({ name, nameW, boxW, items, size, h = 62 }: {
  name: string; nameW: number; boxW: number; items: Item[]; size: string; h?: number;
}) {
  return (
    <div className="flex items-center pl-1" style={{ height: h }}>
      <div className="flex h-[46px] shrink-0 items-center justify-between rounded-[7px] border-2 border-[#e0e2e6] bg-[#f6f7fa] pr-[8px] pl-[5px] text-[36px] leading-none text-[#262626]" style={{ width: boxW }}>
        <Fit w={nameW} className="-mt-1">{name}</Fit>
        <Tri w={15} h={13} />
      </div>
      <div className={`ml-[2px] flex items-center leading-none ${size}`}>
        {items.map(([text, w, gap, aw, after, down, color]) => (
          <div key={text} className="flex items-center" style={{ color, marginRight: after }}>
            <Fit w={w} className="-mt-1">{text}</Fit>
            <span style={{ marginLeft: gap }}><Arrow down={down} w={aw} h={28} /></span>
          </div>
        ))}
      </div>
    </div>
  );
}

function Indicators() {
  return (
    <div className="relative w-[681px] shrink-0">
      <MainChart />
      <Readout
        name="成交量" nameW={107} boxW={152} h={63} size="text-[31px]"
        items={[
          ["42440", 51, 3, 9, 9, true, c.black],
          ["MA1:66252", 86, 3, 9, 9, true, c.yellow],
          ["MA2:67987", 86, 3, 9, 8, true, c.purple],
          ["MA3:10.13万", 95, 4, 9, 0, true, "#0a990a"],
        ]}
      />
      <VolumeChart />
      <Readout
        name="MACD" nameW={108} boxW={152} size="text-[38px]"
        items={[
          ["DIF:0.48", 114, 10, 13, 15, true, c.black],
          ["DEA:0.66", 131, 8, 13, 16, true, c.yellow],
          ["M:-0.36", 107, 8, 13, 0, false, c.purple],
        ]}
      />
      <MacdChart />
      <Readout
        name="WR" nameW={58} boxW={101} size="text-[38px]"
        items={[
          ["WR1:57.67", 185, 12, 15, 23, false, c.black],
          ["WR2:34.63", 195, 11, 15, 0, false, c.yellow],
        ]}
      />
      <WrChart />
      <Readout
        name="BOLL" nameW={92} boxW={136} size="text-[38px]"
        items={[
          ["MID:21.54", 125, 6, 12, 13, false, c.black],
          ["UP:23.08", 115, 6, 12, 13, true, c.yellow],
          ["LOW:20.00", 142, 8, 12, 0, false, c.purple],
        ]}
      />
      <BollChart />
      <div className="flex h-[66px] items-center justify-between pr-[5px] pl-1 text-[39px] leading-none text-[#8a8a8a]">
        <Fit w={183}>20250523</Fit>
        <Fit w={173}>20250811</Fit>
      </div>
      <div className="absolute top-[348px] right-0 flex h-[61px] w-[45px] items-center justify-center rounded-l-[10px] bg-[#969696]">
        <svg width="18" height="28" viewBox="0 0 18 28" fill="none" stroke="#fff" strokeWidth="4" strokeLinecap="round">
          <path d="M3 2.500 14 14 3 25.500" />
        </svg>
      </div>
    </div>
  );
}

const chips = [68, 80, 91, 105, 117, 129, 141, 153, 184, 215, 266, 360, 454, 534, 630, 743, 851, 962, 1037, 1076, 1080, 970, 821, 722, 618, 534, 446, 397, 350, 372, 439, 536, 528, 443, 394, 344, 341, 370, 345, 318, 331, 324, 330, 348, 369, 370, 271, 189, 165, 179, 212, 247, 285, 345, 406, 450, 463, 482, 496, 498, 518, 516, 466, 457, 474, 416, 362, 312, 304, 323, 364, 426, 509, 667, 724, 688, 655, 629, 633, 629, 709, 711, 658, 580, 427, 468, 529, 638, 823, 898, 780, 675, 683, 598, 501, 431, 408, 376, 324, 298, 228, 206, 250, 251, 234, 205, 165, 142, 121, 124, 199, 207, 216, 249, 262, 240, 225];

function ChipPanel() {
  const pitch = 1034 / chips.length;
  return (
    <div className="ml-[17px] w-[342px]">
      <svg width="342" height="346" viewBox="60 21 1026 1038" className="block">
        <rect x="62" y="25" width="1018" height="1032" fill="#fff" stroke="#c8c8c8" strokeWidth="4" />
        {chips.map((x, i) => (
          <g key={i}>
            <rect x="62" y={24 + i * pitch} width={x - 62} height={pitch + 0.5} fill={i < 33 ? "#5cba43" : "#e84848"} />
            <rect x="62" y={24 + i * pitch} width={x - 62} height="1.500" fill="#fff" opacity="0.250" />
          </g>
        ))}
        <path d="M60 567H812" stroke="#4080d4" strokeWidth="9" strokeDasharray="24 24" />
        <rect x="819" y="514" width="261" height="107" rx="16" fill="#86b2ec" />
        <Label x={838} y={600} w={224} size={92} color="#fff">18.87</Label>
      </svg>
      <div className="flex h-[63px] items-center justify-between pr-[2px] text-[29px] leading-none text-[#666]">
        <span className="flex items-center gap-[6px]"><i className="size-[18px] bg-[#5cba43]" /><span className="-mt-[3px]">套牢</span></span>
        <span className="flex items-center gap-[6px]"><i className="size-[18px] bg-[#e84848]" /><span className="-mt-[3px]">获利</span></span>
        <span className="flex items-center gap-[6px]"><i className="size-[18px] bg-[#3280e0]" /><span className="-mt-[3px]">平均</span></span>
      </div>
      <div className="pt-[2px]">
        {[
          ["获利比例:", "68.44%", 105, 133],
          ["平均成本:", "18.87", 75, 133],
          ["90%成本:", "14.95-22.63", 163, 135],
          ["集中度:", "20.44%", 105, 103],
        ].map(([label, value, w, lw]) => (
          <div key={label} className="flex h-[47px] items-center justify-between pr-[2px] pl-px text-[30px] leading-none text-[#333]">
            <Fit w={lw as number} className="text-[29px] text-[#666]">{label}</Fit>
            <Fit w={w as number}>{value}</Fit>
          </div>
        ))}
      </div>
      <div className="mt-[12px] flex h-[50px] items-center pr-[2px] pl-px text-[29px] leading-none text-[#999]">
        <span>说明</span>
        <svg width="36" height="36" viewBox="0 0 36 36" className="ml-[7px]">
          <circle cx="18" cy="18" r="17.500" fill="#ccc" />
          <circle cx="18" cy="10.500" r="2.500" fill="#fff" />
          <path d="M18 15.500v12" stroke="#fff" strokeWidth="4" />
        </svg>
        <Fit w={158} className="ml-auto">2025-08-11</Fit>
      </div>
    </div>
  );
}

/* ---------- bottom bar ---------- */

function NavItem({ label, w, className, children }: { label: string; w: number; className: string; children: React.ReactNode }) {
  return (
    <div className={`flex flex-col items-center pt-[8px] text-[#666] ${className}`}>
      <svg width="64" height="62" viewBox="0 0 64 62" fill="none" stroke="currentColor" strokeWidth="2.800">
        {children}
      </svg>
      <Fit w={w} className="mt-[12px] -ml-[2px] text-[38px] leading-[42px]">{label}</Fit>
    </div>
  );
}

function BottomBar() {
  return (
    <div className="flex h-[177px] border-t-2 border-[#d6d8dd] bg-[#f6f7fa]">
      <div className="w-[274px] shrink-0 pt-[9px]">
        <svg width="22" height="8" className="ml-[127px] block"><path d="M0 8 11 0l11 8z" fill="#77777c" /></svg>
        <Fit w={162} className="mt-[5px] ml-[57px] text-[44px] leading-[50px] text-[#e02e2e]">3647.55</Fit>
        <div className="flex h-[50px] items-center pl-[38px] leading-none">
          <span className="text-[38px] text-[#666]">上证</span>
          <Fit w={117} className="ml-[42px] text-[42px] text-[#e02e2e]">0.34%</Fit>
        </div>
      </div>
      <NavItem label="交易" w={77} className="w-[202px]">
        <path d="M16.300 7.500A28 28 0 0 1 56.500 43l7.800-3.500M50.300 51.500A28 28 0 0 1 9.700 16.700L.5 19.500" />
        <path d="M22.300 16.700 32.700 27l10-10.300M32.700 27v18.500M22 27.500h21.500M22 36.500h21.500" />
      </NavItem>
      <NavItem label="发帖" w={77} className="w-[202px]">
        <path d="M42.500 4.500H14a7 7 0 0 0-7 7v37a7 7 0 0 0 7 7h37a7 7 0 0 0 7-7V19" />
        <path d="M23.300 39l2-7.500L47.500 10l4.500 4-22 22z" fill="currentColor" stroke="none" />
        <path d="M53.500 9.500 56 7" strokeWidth="6" strokeLinecap="round" />
      </NavItem>
      <NavItem label="功能" w={77} className="w-[201px]">
        <rect x="7" y="6" width="22" height="22" rx="4" />
        <rect x="7" y="34" width="22" height="22" rx="4" />
        <rect x="34" y="34" width="22" height="22" rx="4" />
        <path d="M45.500 4.500 57.500 17l-12 12.500L34 17z" strokeLinejoin="round" />
      </NavItem>
      <NavItem label="设自选" w={117} className="w-[201px]">
        <circle cx="31" cy="31" r="27" />
        <circle cx="19.500" cy="31" r="3" fill="currentColor" stroke="none" />
        <circle cx="31" cy="31" r="3" fill="currentColor" stroke="none" />
        <circle cx="42.500" cy="31" r="3" fill="currentColor" stroke="none" />
      </NavItem>
    </div>
  );
}

export default function App() {
  return (
    <div className="flex h-[2400px] w-[1080px] flex-col overflow-hidden bg-white font-['Noto_Sans_CJK_SC','Noto_Sans',sans-serif]">
      <StatusBar />
      <NavBar />
      <div className="flex h-[120px] shrink-0 items-center justify-between bg-[#fcede4] pr-[43px] pl-[36px]">
        <Fit w={882} className="text-[42px] leading-none text-[#e0560c] -mt-[2px]">一键开通科创成长层权限！把握打新、交易机会</Fit>
        <Close size={34} color="#e0560c" />
      </div>
      <Quote />
      <Alert />
      <Tabs />
      <div className="pt-px"><MaPanel /></div>
      <div className="flex pl-[12px]">
        <Indicators />
        <ChipPanel />
      </div>
      <div className="mt-auto shrink-0"><BottomBar /></div>
    </div>
  );
}
